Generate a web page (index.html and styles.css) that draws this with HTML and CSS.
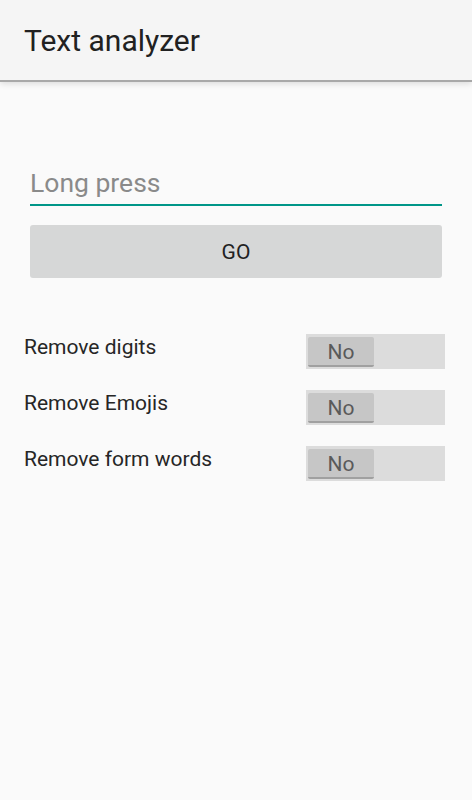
FILE: index.html
```html
<!DOCTYPE html>
<html lang="en">
<head>
  <meta charset="UTF-8">
  <meta name="viewport" content="width=device-width, initial-scale=1.0">
  <title>Text analyzer</title>
  <link rel="stylesheet" href="styles.css">
</head>
<body>

  <div class="toolbar">
    <h1>Text analyzer</h1>
  </div>

  <div class="content">
    <div class="field">
      <input type="text" placeholder="Long press">
    </div>

    <button class="go">GO</button>

    <div class="options">
      <div class="option">
        <span>Remove digits</span>
        <div class="switch"><div class="thumb">No</div></div>
      </div>
      <div class="option">
        <span>Remove Emojis</span>
        <div class="switch"><div class="thumb">No</div></div>
      </div>
      <div class="option">
        <span>Remove form words</span>
        <div class="switch"><div class="thumb">No</div></div>
      </div>
    </div>
  </div>

</body>
</html>
```

FILE: styles.css
```css
body {
  margin: 0;
  font-family: Roboto, "Liberation Sans", sans-serif;
  background-color: #fafafa;
  color: #212121;
}
.toolbar {
  height: 80px;
  background: #f5f5f5;
  border-bottom: 2px solid #a8a8a8;
  box-shadow: 0 2px 6px rgba(0,0,0,0.12);
  display: flex;
  align-items: center;
  padding: 0 24px;
}
.toolbar h1 {
  margin: 0;
  font-size: 30px;
  font-weight: 400;
  color: #212121;
}
.content {
  padding: 0 30px;
}
.field {
  margin-top: 85px;
}
.field input {
  width: 100%;
  box-sizing: border-box;
  border: 0;
  border-bottom: 2.5px solid #009688;
  background: transparent;
  font-family: inherit;
  font-size: 26.5px;
  padding: 0 0 6px;
  outline: none;
}
.field input::placeholder {
  color: #8a8a8a;
}
.go {
  display: block;
  width: 100%;
  height: 53px;
  margin-top: 19px;
  border: 0;
  border-radius: 3px;
  background: #d6d7d7;
  font-family: inherit;
  font-size: 21px;
  color: #222;
  padding: 0;
}
.options {
  margin: 56px -3px 0 -6px;
}
.option {
  display: flex;
  justify-content: space-between;
  align-items: flex-start;
  height: 56px;
}
.option span {
  font-size: 21px;
  line-height: 26px;
  color: #262626;
}
.switch {
  width: 139px;
  height: 35px;
  background: #dcdcdc;
  box-sizing: border-box;
  padding: 3px 2px 1px;
}
.thumb {
  width: 66px;
  height: 30px;
  box-sizing: border-box;
  background: #c6c6c6;
  border-bottom: 2px solid #a0a0a0;
  border-radius: 2px;
  color: #5a5a5a;
  font-size: 21px;
  text-align: center;
  line-height: 30px;
}
```
